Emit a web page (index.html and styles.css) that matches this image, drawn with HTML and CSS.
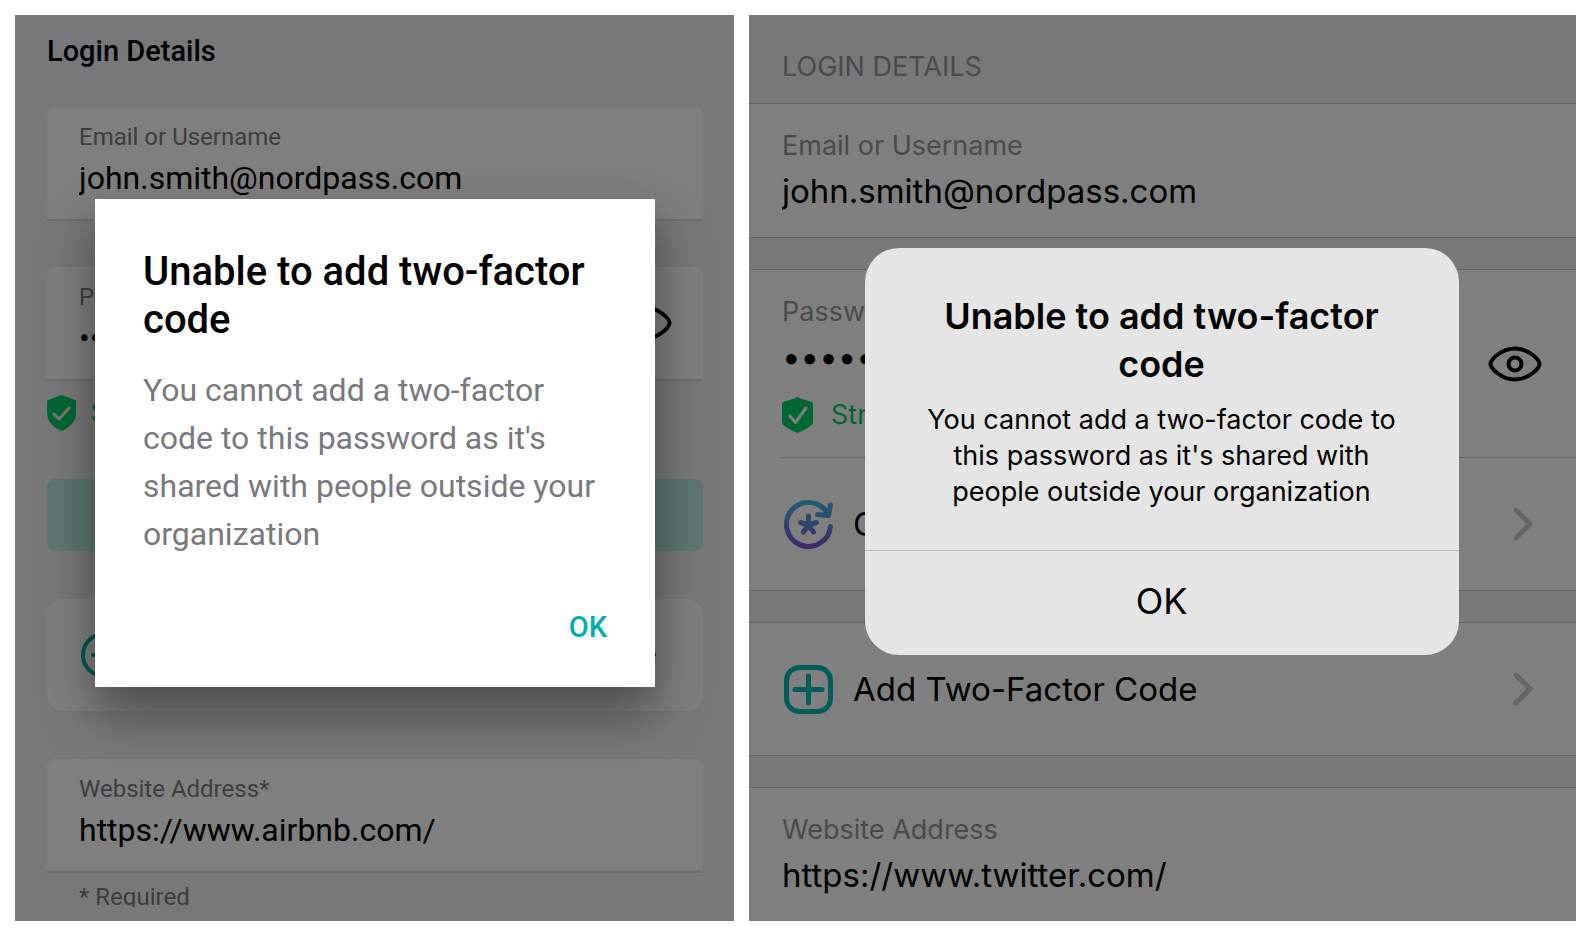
FILE: index.html
```html
<!DOCTYPE html>
<html lang="en">
<head>
<meta charset="utf-8">
<meta name="viewport" content="width=device-width, initial-scale=1">
<title>Unable to add two-factor code</title>
<link rel="stylesheet" href="styles.css">
</head>
<body>
<main class="screens">

  <section class="screen android">
    <div class="form">
      <h2 class="form-title">Login Details</h2>

      <div class="field">
        <label for="a-email">Email or Username</label>
        <input id="a-email" type="text" value="john.smith@nordpass.com" readonly>
      </div>

      <div class="field field-password">
        <div class="field-main">
          <label for="a-password">Password</label>
          <input id="a-password" type="password" value="password12" readonly>
        </div>
        <button class="icon-button" type="button" aria-label="Show password">
          <svg class="eye" viewBox="0 0 54 36"><path d="M2.500 18C2.500 14 13 2.500 27 2.500S51.500 14 51.500 18 41 33.500 27 33.500 2.500 22 2.500 18z"/><circle cx="27" cy="18" r="6.500"/></svg>
        </button>
      </div>

      <p class="strength">
        <svg class="shield" viewBox="0 0 30 36"><path class="shield-body" d="M14.500 0 29 5.500V18C29 27 22 33 14.500 36 7 33 0 27 0 18V5.500z"/><path class="shield-tick" d="M7 19l5 5L22 13"/></svg>
        Strong
      </p>

      <button class="generate" type="button">Generate Password</button>

      <button class="add-code" type="button">
        <svg class="plus-round" viewBox="0 0 48 48"><circle cx="25" cy="24" r="21"/><path d="M14 24h22M25 13v22"/></svg>
        <span>Add Two-Factor Code</span>
        <svg class="next" viewBox="0 0 48 48"><path d="M19 12l12 12-12 12"/></svg>
      </button>

      <div class="field">
        <label for="a-site">Website Address*</label>
        <input id="a-site" type="text" value="https://www.airbnb.com/" readonly>
      </div>
      <p class="note">* Required</p>
    </div>

    <div class="scrim">
      <div class="dialog" role="alertdialog" aria-labelledby="a-title" aria-describedby="a-text">
        <h1 id="a-title">Unable to add two-factor code</h1>
        <p id="a-text">You cannot add a two-factor code to this password as it's shared with people outside your organization</p>
        <button type="button">OK</button>
      </div>
    </div>
  </section>

  <section class="screen ios">
    <h2 class="section-title">LOGIN DETAILS</h2>

    <div class="group">
      <div class="row">
        <div class="row-main">
          <label for="i-email">Email or Username</label>
          <input id="i-email" type="text" value="john.smith@nordpass.com" readonly>
        </div>
      </div>
    </div>

    <div class="group">
      <div class="row">
        <div class="row-main">
          <label for="i-password">Password</label>
          <input id="i-password" type="password" value="password12" readonly>
          <p class="strength">
            <svg class="shield" viewBox="0 0 31 36"><path class="shield-body" d="M15.500 0C20 2 25 4 29 4.500q2 .5 2 2.500V25q0 2-2 3.500C25 32 20 34 15.500 36 11 34 6 32 2 28.500Q0 27 0 25V7q0-2 2-2.500C6 4 11 2 15.500 0z"/><path class="shield-tick" d="M8 19l5.500 6.500L24 11"/></svg>
            Strong
          </p>
        </div>
        <button class="icon-button" type="button" aria-label="Show password">
          <svg class="eye" viewBox="0 0 54 36"><path d="M2.500 18C2.500 14 13 2.500 27 2.500S51.500 14 51.500 18 41 33.500 27 33.500 2.500 22 2.500 18z"/><circle cx="27" cy="18" r="6.500"/></svg>
        </button>
      </div>
      <hr>
      <button class="action" type="button">
        <svg class="action-icon" viewBox="0 0 49 49">
          <defs><linearGradient id="fade" gradientUnits="userSpaceOnUse" x1="0" y1="2" x2="0" y2="47"><stop offset="0" stop-color="#42bcdc"/><stop offset="1" stop-color="#8252de"/></linearGradient></defs>
          <g class="refresh"><path d="M46.400 26.500A22 22 0 1 1 43.300 13M46.500 5l-2 10.500-11-1"/><path d="M24.500 16v9M16.500 22.500l8 2.500 8-2.500M19.500 32l5-7 5 7"/></g>
        </svg>
        <span>Generate Password</span>
        <svg class="chevron" viewBox="0 0 20 34"><path d="M3 3l14 14L3 31"/></svg>
      </button>
    </div>

    <div class="group">
      <button class="action" type="button">
        <svg class="action-icon" viewBox="0 0 49 49"><g class="plus"><rect x="2.500" y="2.500" width="44" height="44" rx="13"/><path d="M24.500 11v27M11 24.500h27"/></g></svg>
        <span>Add Two-Factor Code</span>
        <svg class="chevron" viewBox="0 0 20 34"><path d="M3 3l14 14L3 31"/></svg>
      </button>
    </div>

    <div class="group last">
      <div class="row">
        <div class="row-main">
          <label for="i-site">Website Address</label>
          <input id="i-site" type="text" value="https://www.twitter.com/" readonly>
        </div>
      </div>
    </div>

    <div class="scrim">
      <div class="alert" role="alertdialog" aria-labelledby="i-title" aria-describedby="i-text">
        <h1 id="i-title">Unable to add two-factor code</h1>
        <p id="i-text">You cannot add a two-factor code to this password as it's shared with people outside your organization</p>
        <button type="button">OK</button>
      </div>
    </div>
  </section>

</main>
</body>
</html>
```

FILE: styles.css
```css
* { box-sizing: border-box; }

body { margin: 0; background: #fff; color: #000; }

h1, h2, p { margin: 0; }

button, input { font: inherit; color: inherit; margin: 0; padding: 0; border: 0; background: none; outline: none; }

button { cursor: pointer; }

input { display: block; width: 100%; text-overflow: clip; }

svg { display: block; flex: none; fill: none; stroke-linecap: round; stroke-linejoin: round; }

.screens {
  display: grid;
  grid-template-columns: 719fr 827fr;
  gap: 15px;
  padding: 15px;
  min-height: 100vh;
}

.screen {
  position: relative;
  min-width: 0;
  overflow: hidden;
  background: #f1f1f5;
}

.scrim {
  position: absolute;
  inset: 0;
  display: flex;
  align-items: center;
  justify-content: center;
  background: rgba(0, 0, 0, 0.5);
}

.eye { width: 54px; height: 36px; stroke: #000; stroke-width: 4; }

.shield { height: 36px; }
.shield-body { fill: #00cc66; }
.shield-tick { stroke: #f1f1f5; stroke-width: 3; }

.strength { display: flex; align-items: center; color: #00cc66; }

/* Android */

.android { font-family: Roboto, sans-serif; }

.form { padding: 16px 31px 0 32px; }

.form-title { font-size: 29px; line-height: 40px; font-weight: 500; margin-bottom: 36px; }

.field {
  padding: 14px 32px 21px;
  background: #fff;
  border-bottom: 2px solid #dadade;
  border-radius: 8px 8px 0 0;
}

.field label { display: block; font-size: 24px; line-height: 32px; margin-bottom: 5px; color: #7c7c80; }
.field input { font-size: 32px; line-height: 40px; height: 40px; }

.field-password { display: flex; align-items: center; margin-top: 46px; padding-right: 31px; }
.field-main { flex: 1; min-width: 0; }
.field-password .icon-button { margin-top: 6px; }

.android .strength { gap: 14px; margin-top: 14px; font-size: 29px; line-height: 36px; font-weight: 500; }
.android .shield { width: 30px; }

.generate {
  display: block;
  width: 100%;
  height: 72px;
  margin-top: 48px;
  border-radius: 8px;
  background: #bcece6;
  color: #5fb5af;
  font-size: 29px;
  font-weight: 500;
}

.add-code {
  display: flex;
  align-items: center;
  gap: 32px;
  width: 100%;
  height: 112px;
  margin: 48px 0;
  padding: 0 32px;
  border-radius: 16px;
  background: #fff;
  font-size: 32px;
  text-align: left;
}

.add-code span { flex: 1; }
.plus-round { width: 48px; height: 48px; stroke: #00b0a9; stroke-width: 4; }
.next { width: 48px; height: 48px; stroke: #000; stroke-width: 4; }

.note { height: 34px; overflow: hidden; padding: 8px 32px 0; font-size: 24px; line-height: 32px; color: #7c7c80; }

.android .scrim { padding: 0 79px 50px 80px; }

.dialog {
  flex: 1;
  display: flex;
  flex-direction: column;
  padding: 49px 48px 36px;
  background: #fff;
  box-shadow: 0 24px 48px rgba(0, 0, 0, 0.42);
}

.dialog h1 { font-size: 40px; line-height: 48px; font-weight: 500; margin-bottom: 22px; }
.dialog p { font-size: 32px; line-height: 48px; color: #78787d; margin-bottom: 45px; }
.dialog button { align-self: flex-end; font-size: 29px; line-height: 48px; font-weight: 500; color: #00b0a9; }

/* iOS */

.ios { font-family: Inter, sans-serif; }

.section-title { padding: 36px 33px 20px; font-size: 27px; line-height: 32px; font-weight: 400; color: #969699; }

.group { margin-bottom: 31px; border: solid #cccccf; border-width: 1px 0; background: #fff; }
.group.last { margin-bottom: 0; border-bottom: 0; }
.group hr { margin: 0 0 0 33px; border: 0; border-top: 1px solid #cccccf; }

.row { display: flex; align-items: center; padding: 24px 34px 24px 33px; }
.row-main { flex: 1; min-width: 0; }
.row label { display: block; font-size: 27px; line-height: 36px; margin-bottom: 5px; color: #969699; }
.row input { font-size: 33px; line-height: 44px; height: 44px; }

.ios .strength { gap: 18px; margin-top: 18px; font-size: 27px; line-height: 36px; }
.ios .shield { width: 31px; }
.ios .shield-tick { stroke: #fff; }

.action {
  display: flex;
  align-items: center;
  gap: 20px;
  width: 100%;
  height: 132px;
  padding: 0 43px 0 35px;
  font-size: 33px;
  text-align: left;
}

.action span { flex: 1; }
.action-icon { width: 49px; height: 49px; }
.refresh { stroke: url(#fade); stroke-width: 5; }
.plus { stroke: #00bab4; stroke-width: 5; }
.chevron { width: 20px; height: 34px; stroke: #cacace; stroke-width: 5; }

.ios .scrim { padding: 0 2px 33px 0; }

.alert {
  width: 72%;
  overflow: hidden;
  border-radius: 34px;
  background: #e5e5e5;
  text-align: center;
}

.alert h1 { padding: 44px 48px 0; font-size: 36px; line-height: 48px; font-weight: 600; }
.alert p { padding: 14px 48px 40px; font-size: 27px; line-height: 36px; }
.alert button { display: block; width: 100%; height: 105px; padding-bottom: 4px; border-top: 1px solid #bbb; font-size: 36px; }
```
